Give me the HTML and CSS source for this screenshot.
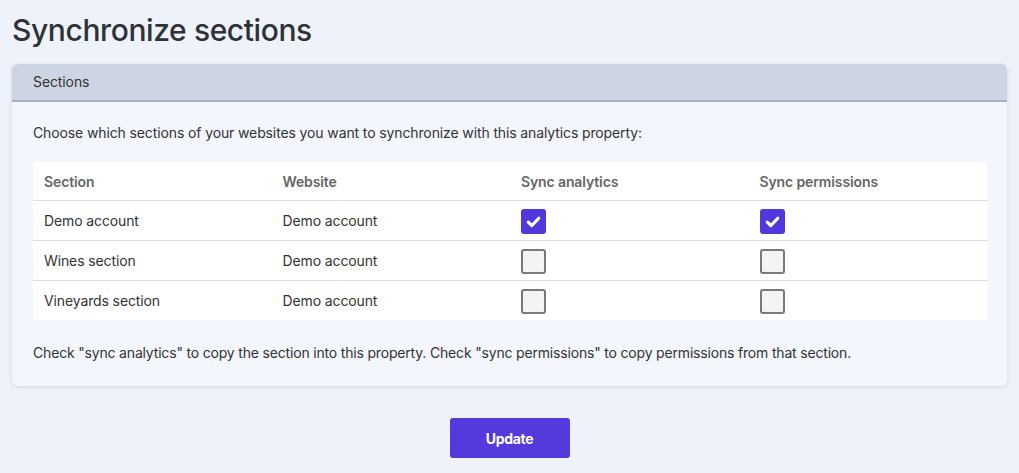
FILE: index.html
```html
<!DOCTYPE html>
<html>
<head>
<meta charset="utf-8">
<link rel="stylesheet" href="styles.css">
</head>
<body>
<div class="page">
  <h1 class="title">Synchronize sections</h1>
  <div class="card">
    <div class="card-header">Sections</div>
    <div class="card-body">
      <p class="intro">Choose which sections of your websites you want to synchronize with this analytics property:</p>
      <table class="sync-table">
        <thead>
          <tr><th>Section</th><th>Website</th><th>Sync analytics</th><th>Sync permissions</th></tr>
        </thead>
        <tbody>
          <tr>
            <td>Demo account</td><td>Demo account</td>
            <td><span class="cb checked"><svg viewBox="0 0 24 24" width="24" height="24"><path d="M7 12.6l3.3 3.3 6.8-7" fill="none" stroke="#fff" stroke-width="3" stroke-linecap="round" stroke-linejoin="round"/></svg></span></td>
            <td><span class="cb checked"><svg viewBox="0 0 24 24" width="24" height="24"><path d="M7 12.6l3.3 3.3 6.8-7" fill="none" stroke="#fff" stroke-width="3" stroke-linecap="round" stroke-linejoin="round"/></svg></span></td>
          </tr>
          <tr>
            <td>Wines section</td><td>Demo account</td>
            <td><span class="cb"></span></td>
            <td><span class="cb"></span></td>
          </tr>
          <tr>
            <td>Vineyards section</td><td>Demo account</td>
            <td><span class="cb"></span></td>
            <td><span class="cb"></span></td>
          </tr>
        </tbody>
      </table>
      <p class="note">Check "sync analytics" to copy the section into this property. Check "sync permissions" to copy permissions from that section.</p>
    </div>
  </div>
  <div class="actions">
    <button class="btn">Update</button>
  </div>
</div>
</body>
</html>
```
FILE: styles.css
```css
html, body {
  margin: 0;
  padding: 0;
  background: #eef2fa;
  font-family: "Inter", "Open Sans", sans-serif;
  color: #333;
}
.page {
  padding: 11px 12px 0 12px;
}
.title {
  margin: 0;
  font-size: 30px;
  font-weight: 500;
  line-height: 38px;
  color: #2f3236;
  letter-spacing: -0.4px;
}
.card {
  margin-top: 15px;
  background: #f3f6fd;
  border-radius: 6px;
  box-shadow: 0 1px 4px rgba(60, 70, 100, 0.15);
  overflow: hidden;
}
.card-header {
  background: #cdd5e4;
  border-bottom: 2px solid #a9b0bd;
  height: 36px;
  line-height: 36px;
  padding: 0 21px;
  font-size: 14px;
  color: #333;
  letter-spacing: -0.1px;
}
.card-body {
  padding: 21px 20px 23px 21px;
}
.intro {
  margin: 0 0 19px 0;
  font-size: 14px;
  line-height: 20px;
  color: #333;
  letter-spacing: -0.12px;
}
.sync-table {
  width: 100%;
  border-collapse: collapse;
  background: #fff;
  table-layout: fixed;
}
.sync-table th, .sync-table td {
  text-align: left;
  padding: 0 11px;
  font-size: 14px;
  vertical-align: middle;
  letter-spacing: -0.12px;
}
.sync-table th {
  height: 38px;
  font-weight: 600;
  color: #666;
}
.sync-table td {
  height: 39px;
  color: #333;
  border-top: 1px solid #dcdde0;
}
.cb {
  display: block;
  width: 25px;
  height: 25px;
  margin-top: 1px;
  box-sizing: border-box;
  border: 2px solid #7a7a7a;
  border-radius: 3px;
  background: #f4f4f4;
}
.cb.checked {
  border: none;
  background: #5138dd;
}
.cb svg {
  display: block;
  width: 25px;
  height: 25px;
}
.note {
  margin: 23px 0 0 0;
  font-size: 14px;
  line-height: 20px;
  color: #333;
  letter-spacing: -0.18px;
}
.actions {
  display: flex;
  justify-content: center;
  padding-top: 32px;
}
.btn {
  width: 120px;
  height: 40px;
  border: none;
  border-radius: 3px;
  background: #5439dd;
  color: #fff;
  font-family: "Inter", sans-serif;
  font-weight: 700;
  font-size: 14px;
  letter-spacing: -0.3px;
}
```
